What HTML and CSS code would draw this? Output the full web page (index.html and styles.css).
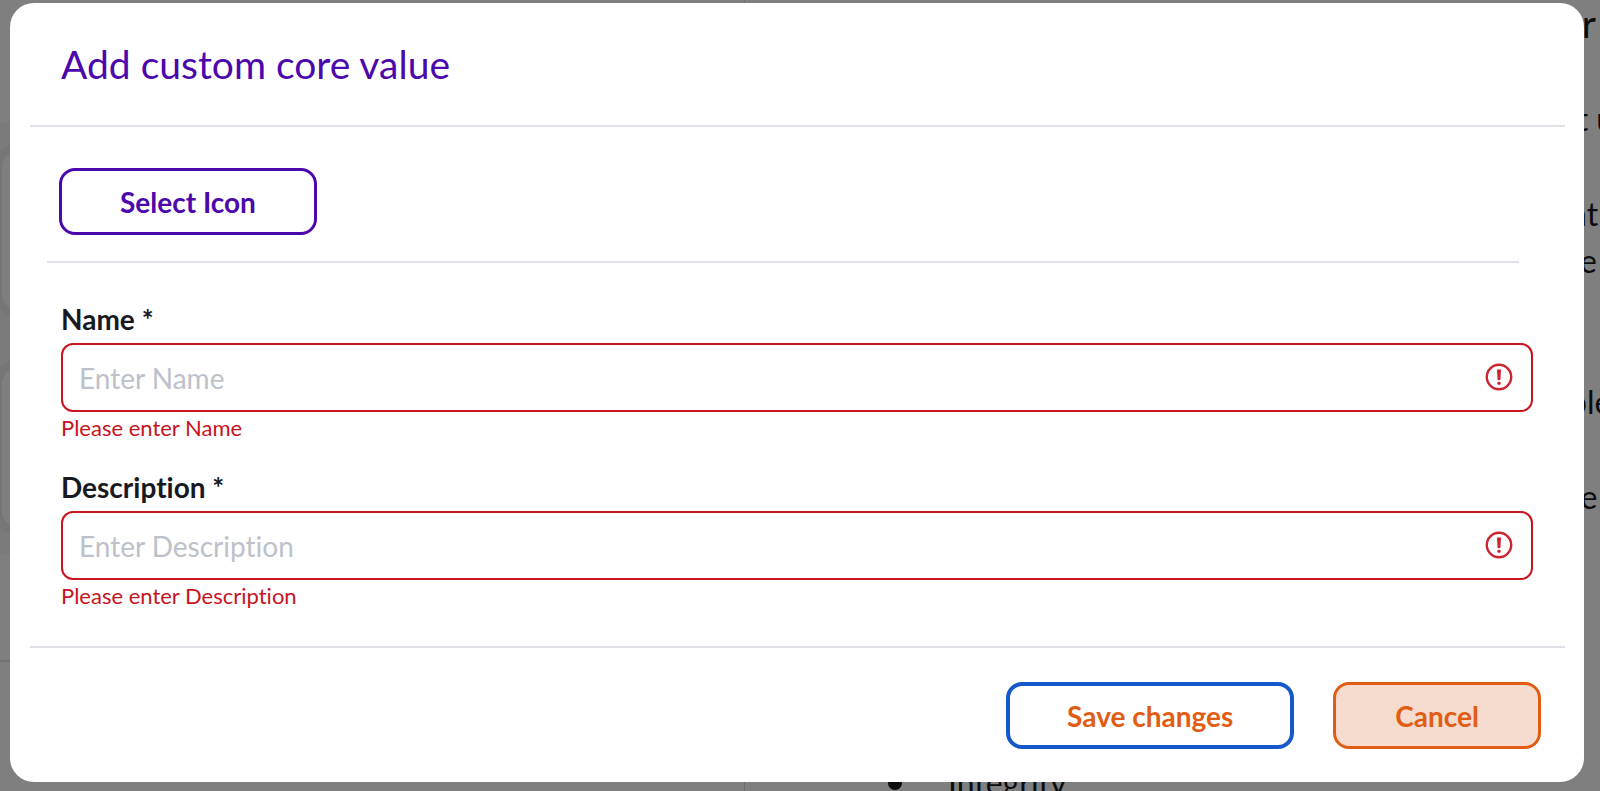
FILE: index.html
```html
<!DOCTYPE html>
<html lang="en">
<head>
  <meta charset="UTF-8">
  <meta name="viewport" content="width=device-width, initial-scale=1.0">
  <title>Add custom core value</title>
  <link rel="stylesheet" href="styles.css">
</head>
<body>

  <div class="page">
    <div class="value-list">
      <div class="value-cards">
        <div class="value-card"></div>
        <div class="value-card"></div>
      </div>
      <div class="list-end"></div>
    </div>
    <div class="guide">
      <div class="guide-text">
        <h2>r</h2>
        <p>it u</p>
        <p>nt<br>re</p>
        <p class="spaced">ple</p>
        <p>te</p>
      </div>
      <ul class="guide-list">
        <li>Integrity</li>
      </ul>
    </div>
  </div>

  <div class="overlay">
    <form class="modal" role="dialog" aria-labelledby="modalTitle" novalidate>
      <div class="modal-header">
        <h1 id="modalTitle">Add custom core value</h1>
      </div>

      <div class="modal-body">
        <button type="button" class="btn btn-icon">Select Icon</button>
        <hr>

        <div class="field">
          <label for="name">Name *</label>
          <div class="input-wrap">
            <input type="text" id="name" placeholder="Enter Name" required>
            <svg class="error-icon" viewBox="0 0 28 28" aria-hidden="true">
              <circle cx="14" cy="14" r="12.2" fill="none" stroke="currentColor" stroke-width="2.4"/>
              <path d="M12 6.500h4l-.6 10.500h-2.800z" fill="currentColor"/>
              <circle cx="14" cy="20.200" r="1.700" fill="currentColor"/>
            </svg>
          </div>
          <div class="error-message">Please enter Name</div>
        </div>

        <div class="field">
          <label for="description">Description *</label>
          <div class="input-wrap">
            <input type="text" id="description" placeholder="Enter Description" required>
            <svg class="error-icon" viewBox="0 0 28 28" aria-hidden="true">
              <circle cx="14" cy="14" r="12.2" fill="none" stroke="currentColor" stroke-width="2.4"/>
              <path d="M12 6.500h4l-.6 10.500h-2.800z" fill="currentColor"/>
              <circle cx="14" cy="20.200" r="1.700" fill="currentColor"/>
            </svg>
          </div>
          <div class="error-message">Please enter Description</div>
        </div>
      </div>

      <div class="modal-footer">
        <button type="submit" class="btn btn-save">Save changes</button>
        <button type="button" class="btn btn-cancel">Cancel</button>
      </div>
    </form>
  </div>

</body>
</html>
```
FILE: styles.css
```css
* {
  box-sizing: border-box;
}
body {
  margin: 0;
  height: 100vh;
  overflow: hidden;
  font-family: Lato, sans-serif;
  font-variant-ligatures: none;
  color: #17191f;
  background-color: #ffffff;
}

/* page behind the dialog */
.page {
  display: flex;
  height: 100vh;
  overflow: hidden;
}
.value-list {
  width: 745px;
  flex-shrink: 0;
  padding-top: 123px;
  border-right: 1px solid #dddddd;
}
.value-cards {
  display: flex;
  flex-direction: column;
  gap: 42px;
  padding: 20px 0;
  background-color: #f6f6f6;
}
.value-card {
  height: 175px;
  margin-left: -6px;
  border: 8px solid #ececec;
  border-radius: 24px;
  background-color: #ffffff;
}
.list-end {
  margin-top: 105px;
  border-top: 2px solid #e4e4e4;
}
.guide {
  flex: 1;
  min-width: 0;
  overflow: hidden;
}
.guide-text {
  width: 31px;
  margin-left: auto;
  font-size: 32px;
  line-height: 47px;
  white-space: nowrap;
}
.guide-text h2 {
  margin: 0;
  padding-right: 4px;
  font-size: 39px;
  font-weight: normal;
  text-align: right;
}
.guide-text p {
  margin: 48px 0;
}
.guide-text .spaced {
  margin-top: 94px;
}
.guide-list {
  margin: 0;
  padding: 191px 0 0 203px;
  font-size: 32px;
  line-height: 47px;
  list-style: none;
}
.guide-list li {
  display: flex;
  align-items: center;
}
.guide-list li::before {
  content: "";
  width: 14px;
  height: 14px;
  margin: 0 46px 0 -60px;
  border-radius: 50%;
  background-color: #17191f;
}

/* dialog */
.overlay {
  position: fixed;
  inset: 0;
  padding: 3px 16px 9px 10px;
  background-color: rgba(0, 0, 0, 0.5);
}
.modal {
  background-color: #ffffff;
  border-radius: 24px;
}
.modal-header {
  margin: 0 19px 0 20px;
  padding: 37px 31px;
  border-bottom: 2px solid #dee1e6;
}
.modal-header h1 {
  margin: 0;
  font-size: 39px;
  line-height: 48px;
  font-weight: normal;
  color: #4b08ad;
}
.modal-body {
  padding: 41px 51px 36px;
}
.modal-body hr {
  margin: 26px 14px 38px -14px;
  border: none;
  border-top: 2px solid #dee1e6;
}
.btn {
  height: 67px;
  padding: 0 59px;
  border: 3px solid;
  border-radius: 16px;
  font-family: inherit;
  font-size: 28px;
  font-weight: bold;
  line-height: 34px;
  font-variant-ligatures: none;
  background-color: #ffffff;
  cursor: pointer;
}
.btn-icon {
  display: block;
  margin-left: -2px;
  padding: 0 58px;
  color: #4b08ad;
}
.field + .field {
  margin-top: 27px;
}
label {
  display: block;
  margin-bottom: 6px;
  font-size: 28px;
  font-weight: bold;
  line-height: 36px;
}
.input-wrap {
  position: relative;
}
input {
  display: block;
  width: 100%;
  height: 69px;
  padding: 0 68px 0 16px;
  border: 2px solid #c8141e;
  border-radius: 12px;
  font-family: inherit;
  font-size: 28px;
  font-variant-ligatures: none;
  color: #17191f;
  background-color: #ffffff;
}
input::placeholder {
  color: #bdc1ca;
  opacity: 1;
}
.error-icon {
  position: absolute;
  top: 20px;
  right: 20px;
  width: 28px;
  height: 28px;
  color: #cb2630;
}
.error-message {
  margin-top: 2px;
  font-size: 22px;
  line-height: 28px;
  color: #c8141e;
}
.modal-footer {
  display: flex;
  justify-content: flex-end;
  gap: 39px;
  margin: 0 19px 0 20px;
  padding: 34px 24px 33px;
  border-top: 2px solid #dee1e6;
}
.btn-save {
  padding: 0 57px;
  border: 4px solid #1558c9;
  color: #e25d14;
}
.btn-cancel {
  border-color: #e25d14;
  color: #e25d14;
  background-color: #f5dccf;
}
```
